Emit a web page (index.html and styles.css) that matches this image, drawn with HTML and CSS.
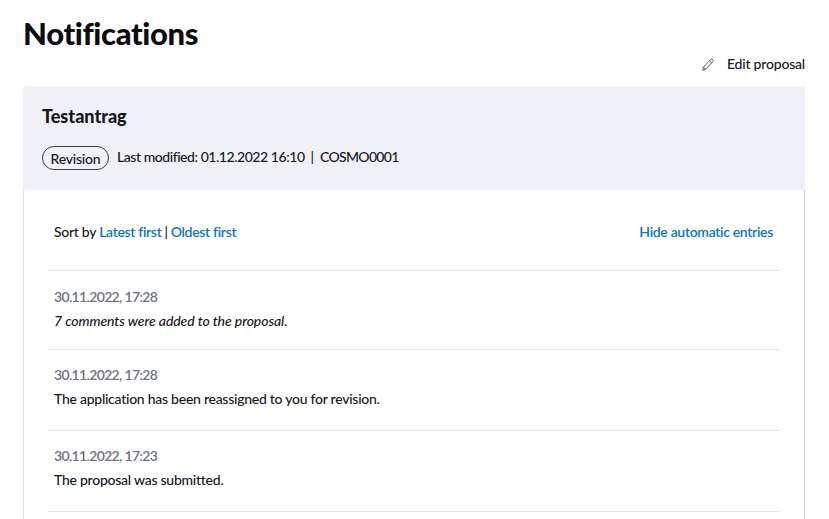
FILE: index.html
```
<!DOCTYPE html>
<html lang="en">
<head>
<meta charset="utf-8">
<title>Notifications</title>
<link rel="stylesheet" href="styles.css">
</head>
<body>
<main class="page">
  <h1 class="title">Notifications</h1>
  <div class="actions">
    <a class="edit"><svg class="pencil" viewBox="0 0 12 13" width="12" height="13"><path d="M.7 12.2 1.5 9 8.6 1.6a1.5 1.5 0 0 1 2.2 0 1.5 1.5 0 0 1 0 2.1L3.7 11.2ZM7.5 2.8l2.2 2.1M1.5 9l2.2 2.2"/></svg><span class="edit-label">Edit proposal</span></a>
  </div>
  <section class="card">
    <header class="head">
      <h2 class="name">Testantrag</h2>
      <div class="meta"><span class="badge">Revision</span><span class="modified">Last modified: 01.12.2022 16:10</span><span class="bar">|</span><span class="code">COSMO0001</span></div>
    </header>
    <div class="body">
      <div class="tools">
        <div class="sort"><span>Sort by</span><a class="link">Latest first</a><span>|</span><a class="link">Oldest first</a></div>
        <a class="link hide">Hide automatic entries</a>
      </div>
      <article class="entry short"><time class="date">30.11.2022, 17:28</time><p class="text auto">7 comments were added to the proposal.</p></article>
      <article class="entry"><time class="date">30.11.2022, 17:28</time><p class="text reassigned">The application has been reassigned to you for revision.</p></article>
      <article class="entry"><time class="date">30.11.2022, 17:23</time><p class="text submitted">The proposal was submitted.</p></article>
      <hr class="rule">
    </div>
  </section>
</main>
</body>
</html>
```
FILE: styles.css
```
* { box-sizing: border-box; margin: 0; padding: 0; }
body { background: #fff; color: #161719; font: 500 14px/24px Lato, sans-serif; white-space: nowrap; }
.page { display: flex; flex-direction: column; height: 519px; padding: 15px 24px 0 23px; }
.title { font-size: 31px; line-height: 37px; height: 37px; font-weight: 900; letter-spacing: -.35px; color: #0c0d0f; }
.actions { display: flex; justify-content: flex-end; height: 34px; }
.edit { display: flex; align-items: center; height: 24px; gap: 13px; }
.pencil { fill: none; stroke: #4a4b4d; stroke-width: .9; stroke-linejoin: round; }
.edit-label { letter-spacing: -.2px; }
.card { display: flex; flex-direction: column; flex: 1; }
.head { height: 104px; background: #eff1f6; padding: 17px 19px 0; }
.name { font-size: 18px; line-height: 26px; font-weight: 900; letter-spacing: 0; }
.meta { display: flex; align-items: center; margin-top: 16px; line-height: 24px; }
.badge { width: 67px; height: 24px; line-height: 23px; border: 1px solid #3c3d40; border-radius: 12px; text-align: center; letter-spacing: -.2px; margin-right: 8px; position: relative; top: 1px; }
.modified { letter-spacing: -.45px; }
.bar { margin: 0 6px; }
.code { letter-spacing: -.7px; }
.body { flex: 1; border: solid #e0e4e6; border-width: 0 1px; border-right-color: #ccced0; padding: 0 24px; }
.tools { display: flex; justify-content: space-between; height: 80px; padding: 30px 7px 0 6px; }
.sort { display: flex; gap: 3px; letter-spacing: -.3px; }
.link { color: #0e73bd; font-weight: 600; letter-spacing: -.32px; }
.entry { height: 81px; border-top: 1px solid #e6e7e9; padding: 13px 6px 0; }
.short { height: 79px; padding-top: 14px; }
.date { display: block; color: #6c737b; font-weight: 600; letter-spacing: -.65px; }
.auto { font-style: italic; letter-spacing: -.08px; }
.reassigned { letter-spacing: -.26px; }
.submitted { letter-spacing: -.25px; }
.rule { border: 0; height: 1px; background: #e6e7e9; }
```
